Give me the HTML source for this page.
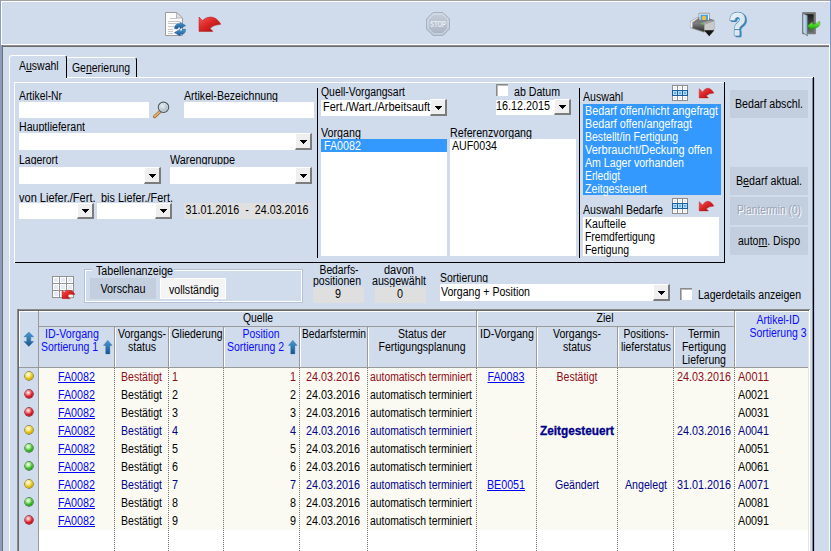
<!DOCTYPE html>
<html><head><meta charset="utf-8"><title>Bedarf</title>
<style>
html,body{margin:0;padding:0;}
body{width:831px;height:551px;overflow:hidden;position:relative;background:#d0dcec;font-family:"Liberation Sans",sans-serif;font-size:12px;}
body div{position:absolute;}
.t{overflow:visible;}
.cb{box-sizing:border-box;background:#efefef;border-top:1px solid #fff;border-left:1px solid #fff;border-right:2px solid #7c7c7c;border-bottom:2px solid #7c7c7c;}
.cb i{position:absolute;left:4px;width:7px;height:1px;background:#000;}
svg{position:absolute;overflow:visible;}
</style></head><body>
<div style="left:0px;top:0px;width:831px;height:1px;background:#a3a3a3;"></div>
<div style="left:1px;top:1px;width:829px;height:1px;background:#fff;"></div>
<div style="left:0px;top:0px;width:1px;height:551px;background:#8a9bbd;"></div>
<div style="left:1px;top:1px;width:1px;height:44px;background:#fff;"></div>
<div style="left:830px;top:0px;width:1px;height:551px;background:#7f98c4;"></div>
<div style="left:1px;top:44px;width:829px;height:1px;background:#fff;"></div>
<div style="left:2px;top:45px;width:827px;height:1px;background:#8e8e8e;"></div>
<div style="left:2px;top:46px;width:827px;height:1px;background:#6c6c6c;"></div>
<div style="left:1px;top:45px;width:1px;height:506px;background:#8c9cbc;"></div>
<div style="left:2px;top:45px;width:1px;height:506px;background:#707070;"></div>
<div style="left:829px;top:45px;width:1px;height:506px;background:#fff;"></div>
<div style="left:67px;top:77px;width:746px;height:1px;background:#fff;"></div>
<div style="left:9px;top:77px;width:1px;height:474px;background:#fff;"></div>
<div style="left:813px;top:77px;width:1px;height:474px;background:#000;"></div>
<div style="left:812px;top:78px;width:1px;height:473px;background:#7a879c;"></div>
<div style="left:814px;top:78px;width:1px;height:473px;background:#b4c4dc;"></div>
<div style="left:9px;top:55px;width:58px;height:23px;border:1px solid #fff;border-bottom:none;border-right:1.4px solid #000;border-radius:3px 3px 0 0;box-sizing:border-box;background:#d0dcec"></div>
<div style="left:67px;top:57px;width:70px;height:20px;border-top:1px solid #fff;border-right:1.4px solid #000;border-radius:0 3px 0 0;box-sizing:border-box;"></div>
<div class="t" style="top:59px;left:18.5px;color:#000;font-size:12px;line-height:14px;height:14px;white-space:pre;transform:scaleX(0.8730);transform-origin:0 0;">A<u>u</u>swahl</div>
<div class="t" style="top:61px;left:71.5px;color:#000;font-size:12px;line-height:14px;height:14px;white-space:pre;transform:scaleX(0.8693);transform-origin:0 0;">Ge<u>n</u>erierung</div>
<div style="left:14px;top:82px;width:710px;height:1px;background:#fff;"></div>
<div style="left:14px;top:82px;width:1px;height:181px;background:#fff;"></div>
<div style="left:15px;top:262px;width:710px;height:1px;background:#000;"></div>
<div style="left:724px;top:82px;width:1px;height:181px;background:#000;"></div>
<div style="left:317px;top:88px;width:1px;height:170px;background:#000;"></div>
<div style="left:579px;top:88px;width:1px;height:170px;background:#000;"></div>
<div class="t" style="top:89px;left:19px;color:#000;font-size:12px;line-height:14px;height:14px;white-space:pre;transform:scaleX(0.8600);transform-origin:0 0;">Artikel-Nr</div>
<div style="left:19px;top:102px;width:130px;height:16px;background:#fff;"></div>
<div class="t" style="top:89px;left:184px;color:#000;font-size:12px;line-height:14px;height:14px;white-space:pre;transform:scaleX(0.8807);transform-origin:0 0;">Artikel-Bezeichnung</div>
<div style="left:184px;top:102px;width:130px;height:16px;background:#fff;"></div>
<div class="t" style="top:120px;left:19px;color:#000;font-size:12px;line-height:14px;height:14px;white-space:pre;transform:scaleX(0.8833);transform-origin:0 0;clip-path:inset(0 0 2.5px 0);">Hauptlieferant</div>
<div style="left:19px;top:133px;width:276px;height:17px;background:#fff;"></div>
<div class="cb" style="left:295px;top:133px;width:17px;height:17px"><i style="top:6px"></i><i style="top:7px;left:5px;width:5px"></i><i style="top:8px;left:6px;width:3px"></i><i style="top:9px;left:7px;width:1px"></i></div>
<div class="t" style="top:153px;left:19px;color:#000;font-size:12px;line-height:14px;height:14px;white-space:pre;transform:scaleX(0.8724);transform-origin:0 0;clip-path:inset(0 0 2.5px 0);">Lagerort</div>
<div style="left:19px;top:166.5px;width:125px;height:17px;background:#fff;"></div>
<div class="cb" style="left:144px;top:166.5px;width:17px;height:17px"><i style="top:6px"></i><i style="top:7px;left:5px;width:5px"></i><i style="top:8px;left:6px;width:3px"></i><i style="top:9px;left:7px;width:1px"></i></div>
<div class="t" style="top:153px;left:170px;color:#000;font-size:12px;line-height:14px;height:14px;white-space:pre;transform:scaleX(0.8995);transform-origin:0 0;clip-path:inset(0 0 2.5px 0);">Warengruppe</div>
<div style="left:170px;top:166.5px;width:125px;height:17px;background:#fff;"></div>
<div class="cb" style="left:295px;top:166.5px;width:17px;height:17px"><i style="top:6px"></i><i style="top:7px;left:5px;width:5px"></i><i style="top:8px;left:6px;width:3px"></i><i style="top:9px;left:7px;width:1px"></i></div>
<div class="t" style="top:191px;left:19px;color:#000;font-size:12px;line-height:14px;height:14px;white-space:pre;transform:scaleX(0.9175);transform-origin:0 0;">von Liefer./Fert.</div>
<div style="left:19px;top:203px;width:58px;height:16px;background:#fff;"></div>
<div class="cb" style="left:77px;top:203px;width:17px;height:16px"><i style="top:5px"></i><i style="top:6px;left:5px;width:5px"></i><i style="top:7px;left:6px;width:3px"></i><i style="top:8px;left:7px;width:1px"></i></div>
<div class="t" style="top:191px;left:100.5px;color:#000;font-size:12px;line-height:14px;height:14px;white-space:pre;transform:scaleX(0.9071);transform-origin:0 0;">bis Liefer./Fert.</div>
<div style="left:97px;top:203px;width:58px;height:16px;background:#fff;"></div>
<div class="cb" style="left:155px;top:203px;width:17px;height:16px"><i style="top:5px"></i><i style="top:6px;left:5px;width:5px"></i><i style="top:7px;left:6px;width:3px"></i><i style="top:8px;left:7px;width:1px"></i></div>
<div style="left:184px;top:203.4px;width:126px;height:15.4px;background:#e0e0e0;"></div>
<div class="t" style="top:203px;left:47px;width:400px;text-align:center;color:#000;font-size:12px;line-height:14px;height:14px;white-space:pre;transform:scaleX(0.8949);transform-origin:50% 0;">31.01.2016  -  24.03.2016</div>
<div class="t" style="top:85px;left:321px;color:#000;font-size:12px;line-height:14px;height:14px;white-space:pre;transform:scaleX(0.8684);transform-origin:0 0;">Quell-Vorgangsart</div>
<div style="left:321px;top:100px;width:109px;height:16px;background:#fff;"></div>
<div class="cb" style="left:430px;top:99px;width:17px;height:17px"><i style="top:6px"></i><i style="top:7px;left:5px;width:5px"></i><i style="top:8px;left:6px;width:3px"></i><i style="top:9px;left:7px;width:1px"></i></div>
<div class="t" style="top:100px;left:322.5px;color:#000;font-size:12px;line-height:14px;height:14px;white-space:pre;transform:scaleX(0.9151);transform-origin:0 0;">Fert./Wart./Arbeitsauft</div>
<div style="left:496px;top:84.3px;width:12.3px;height:12.1px;background:#fff;border-top:1px solid #8a8a8a;border-left:1px solid #8a8a8a;box-sizing:border-box;box-shadow:inset 1px 1px 0 #b8b8b8;"></div>
<div class="t" style="top:85px;left:513.5px;color:#000;font-size:12px;line-height:14px;height:14px;white-space:pre;transform:scaleX(0.8841);transform-origin:0 0;">ab Datum</div>
<div style="left:496px;top:99.6px;width:58px;height:15px;background:#fff;"></div>
<div class="cb" style="left:554px;top:98.8px;width:17px;height:16px"><i style="top:5px"></i><i style="top:6px;left:5px;width:5px"></i><i style="top:7px;left:6px;width:3px"></i><i style="top:8px;left:7px;width:1px"></i></div>
<div class="t" style="top:99px;left:496.4px;color:#000;font-size:12px;line-height:14px;height:14px;white-space:pre;transform:scaleX(0.8991);transform-origin:0 0;">16.12.2015</div>
<div class="t" style="top:126px;left:321px;color:#000;font-size:12px;line-height:14px;height:14px;white-space:pre;transform:scaleX(0.8945);transform-origin:0 0;">Vorgang</div>
<div style="left:321px;top:139px;width:126px;height:117px;background:#fff;"></div>
<div style="left:321px;top:139px;width:126px;height:13px;background:#3399ff;"></div>
<div class="t" style="top:139px;left:323.5px;color:#fff;font-size:12px;line-height:14px;height:14px;white-space:pre;transform:scaleX(0.8943);transform-origin:0 0;">FA0082</div>
<div class="t" style="top:126px;left:450px;color:#000;font-size:12px;line-height:14px;height:14px;white-space:pre;transform:scaleX(0.8907);transform-origin:0 0;">Referenzvorgang</div>
<div style="left:450px;top:139px;width:126px;height:117px;background:#fff;"></div>
<div class="t" style="top:139px;left:452px;color:#000;font-size:12px;line-height:14px;height:14px;white-space:pre;transform:scaleX(0.8875);transform-origin:0 0;">AUF0034</div>
<div class="t" style="top:90px;left:583px;color:#000;font-size:12px;line-height:14px;height:14px;white-space:pre;transform:scaleX(0.8818);transform-origin:0 0;">Auswahl</div>
<div style="left:583px;top:104px;width:138px;height:91px;background:#3399ff;"></div>
<div class="t" style="top:103.6px;left:585px;color:#fff;font-size:12px;line-height:14px;height:14px;white-space:pre;transform:scaleX(0.8993);transform-origin:0 0;">Bedarf offen/nicht angefragt</div>
<div class="t" style="top:116.6px;left:585px;color:#fff;font-size:12px;line-height:14px;height:14px;white-space:pre;transform:scaleX(0.8976);transform-origin:0 0;">Bedarf offen/angefragt</div>
<div class="t" style="top:129.6px;left:585px;color:#fff;font-size:12px;line-height:14px;height:14px;white-space:pre;transform:scaleX(0.8768);transform-origin:0 0;">Bestellt/in Fertigung</div>
<div class="t" style="top:142.6px;left:585px;color:#fff;font-size:12px;line-height:14px;height:14px;white-space:pre;transform:scaleX(0.9167);transform-origin:0 0;">Verbraucht/Deckung offen</div>
<div class="t" style="top:155.6px;left:585px;color:#fff;font-size:12px;line-height:14px;height:14px;white-space:pre;transform:scaleX(0.8833);transform-origin:0 0;">Am Lager vorhanden</div>
<div class="t" style="top:168.6px;left:585px;color:#fff;font-size:12px;line-height:14px;height:14px;white-space:pre;transform:scaleX(0.8602);transform-origin:0 0;">Erledigt</div>
<div class="t" style="top:181.6px;left:585px;color:#fff;font-size:12px;line-height:14px;height:14px;white-space:pre;transform:scaleX(0.8851);transform-origin:0 0;">Zeitgesteuert</div>
<div class="t" style="top:203px;left:583px;color:#000;font-size:12px;line-height:14px;height:14px;white-space:pre;transform:scaleX(0.8817);transform-origin:0 0;">Auswahl Bedarfe</div>
<div style="left:583px;top:217px;width:136px;height:39px;background:#fff;"></div>
<div class="t" style="top:216.5px;left:585px;color:#000;font-size:12px;line-height:14px;height:14px;white-space:pre;transform:scaleX(0.8779);transform-origin:0 0;">Kaufteile</div>
<div class="t" style="top:229.5px;left:585px;color:#000;font-size:12px;line-height:14px;height:14px;white-space:pre;transform:scaleX(0.8602);transform-origin:0 0;">Fremdfertigung</div>
<div class="t" style="top:242.5px;left:585px;color:#000;font-size:12px;line-height:14px;height:14px;white-space:pre;transform:scaleX(0.8678);transform-origin:0 0;">Fertigung</div>
<div style="left:730px;top:90px;width:78px;height:28px;background:#c3cfdf;"></div>
<div class="t" style="top:97px;left:569px;width:400px;text-align:center;color:#000;font-size:12px;line-height:14px;height:14px;white-space:pre;transform:scaleX(0.8864);transform-origin:50% 0;">Bedarf abschl.</div>
<div style="left:730px;top:167px;width:78px;height:28px;background:#c3cfdf;"></div>
<div class="t" style="top:174px;left:569px;width:400px;text-align:center;color:#000;font-size:12px;line-height:14px;height:14px;white-space:pre;transform:scaleX(0.8913);transform-origin:50% 0;">B<u>e</u>darf aktual.</div>
<div style="left:730px;top:197px;width:78px;height:28px;background:#c3cfdf;"></div>
<div class="t" style="top:204px;left:570px;width:400px;text-align:center;color:#fff;font-size:12px;line-height:14px;height:14px;white-space:pre;transform:scaleX(0.8493);transform-origin:50% 0;">Plantermin (0)</div>
<div class="t" style="top:203px;left:569px;width:400px;text-align:center;color:#9aa4b4;font-size:12px;line-height:14px;height:14px;white-space:pre;transform:scaleX(0.8493);transform-origin:50% 0;">Plantermin (0)</div>
<div style="left:730px;top:227px;width:78px;height:28px;background:#c3cfdf;"></div>
<div class="t" style="top:234px;left:569px;width:400px;text-align:center;color:#000;font-size:12px;line-height:14px;height:14px;white-space:pre;transform:scaleX(0.8769);transform-origin:50% 0;">auto<u>m</u>. Dispo</div>
<div style="left:84.5px;top:270.4px;width:217.6px;height:31.6px;border:1.3px solid #fff;box-sizing:border-box;box-shadow:0 0 0 0.8px rgba(130,145,170,.45);"></div>
<div style="left:92px;top:264px;width:81.5px;height:12px;background:#d0dcec;"></div>
<div class="t" style="top:264px;left:95.5px;color:#000;font-size:12px;line-height:14px;height:14px;white-space:pre;transform:scaleX(0.8876);transform-origin:0 0;">Tabellenanzeige</div>
<div style="left:90px;top:278px;width:66px;height:21px;background:#c3cfdf;"></div>
<div class="t" style="top:282px;left:-77px;width:400px;text-align:center;color:#000;font-size:12px;line-height:14px;height:14px;white-space:pre;transform:scaleX(0.8992);transform-origin:50% 0;">Vorschau</div>
<div style="left:160px;top:278px;width:66px;height:21px;background:#f4f4f4;border:1px solid #fff;box-sizing:border-box;"></div>
<div class="t" style="top:283px;left:-6.5px;width:400px;text-align:center;color:#000;font-size:12px;line-height:14px;height:14px;white-space:pre;transform:scaleX(0.8818);transform-origin:50% 0;">vollständig</div>
<div class="t" style="top:263px;left:139px;width:400px;text-align:center;color:#000;font-size:12px;line-height:14px;height:14px;white-space:pre;transform:scaleX(0.8598);transform-origin:50% 0;">Bedarfs-</div>
<div class="t" style="top:274px;left:137px;width:400px;text-align:center;color:#000;font-size:12px;line-height:14px;height:14px;white-space:pre;transform:scaleX(0.8772);transform-origin:50% 0;">positionen</div>
<div style="left:313px;top:286.6px;width:51.2px;height:16.2px;background:#dfdfdf;"></div>
<div class="t" style="top:287px;left:138px;width:400px;text-align:center;color:#000;font-size:12px;line-height:14px;height:14px;white-space:pre;transform:scaleX(0.8972);transform-origin:50% 0;">9</div>
<div class="t" style="top:263px;left:199px;width:400px;text-align:center;color:#000;font-size:12px;line-height:14px;height:14px;white-space:pre;transform:scaleX(0.9173);transform-origin:50% 0;">davon</div>
<div class="t" style="top:274px;left:199px;width:400px;text-align:center;color:#000;font-size:12px;line-height:14px;height:14px;white-space:pre;transform:scaleX(0.8893);transform-origin:50% 0;">ausgewählt</div>
<div style="left:375px;top:286.6px;width:51px;height:16.2px;background:#dfdfdf;"></div>
<div class="t" style="top:287px;left:200px;width:400px;text-align:center;color:#000;font-size:12px;line-height:14px;height:14px;white-space:pre;transform:scaleX(0.8972);transform-origin:50% 0;">0</div>
<div class="t" style="top:271px;left:440px;color:#000;font-size:12px;line-height:14px;height:14px;white-space:pre;transform:scaleX(0.8668);transform-origin:0 0;clip-path:inset(0 0 2.5px 0);">Sortierung</div>
<div style="left:440px;top:284px;width:213px;height:17px;background:#fff;"></div>
<div class="cb" style="left:653px;top:284px;width:17px;height:17px"><i style="top:6px"></i><i style="top:7px;left:5px;width:5px"></i><i style="top:8px;left:6px;width:3px"></i><i style="top:9px;left:7px;width:1px"></i></div>
<div class="t" style="top:285px;left:441px;color:#000;font-size:12px;line-height:14px;height:14px;white-space:pre;transform:scaleX(0.8805);transform-origin:0 0;">Vorgang + Position</div>
<div style="left:680px;top:288.3px;width:12.3px;height:12.1px;background:#fff;border-top:1px solid #8a8a8a;border-left:1px solid #8a8a8a;box-sizing:border-box;box-shadow:inset 1px 1px 0 #b8b8b8;"></div>
<div class="t" style="top:288px;left:698px;color:#000;font-size:12px;line-height:14px;height:14px;white-space:pre;transform:scaleX(0.8772);transform-origin:0 0;">Lagerdetails anzeigen</div>
<div style="left:17px;top:309px;width:793px;height:242px;background:#fff;"></div>
<div style="left:19px;top:311px;width:789px;height:57px;background:#d0dcec;"></div>
<div style="left:19px;top:368px;width:20px;height:183px;background:#d0dcec;"></div>
<div style="left:39px;top:368px;width:769px;height:162px;background:#fafaf2;"></div>
<div style="left:17px;top:309px;width:793px;height:1px;background:#8c8c8c;"></div>
<div style="left:17px;top:310px;width:793px;height:1px;background:#686868;"></div>
<div style="left:17px;top:309px;width:1px;height:242px;background:#8c8c8c;"></div>
<div style="left:18px;top:309px;width:1px;height:242px;background:#686868;"></div>
<div style="left:808px;top:311px;width:1px;height:240px;background:#e4e4e4;"></div>
<div style="left:809px;top:310px;width:1px;height:241px;background:#fff;"></div>
<div style="left:19px;top:311px;width:789px;height:1px;background:#fff;"></div>
<div style="left:19px;top:311px;width:1px;height:57px;background:#fff;"></div>
<div style="left:38px;top:311px;width:1px;height:240px;background:#9a9a9a;"></div>
<div style="left:39px;top:326px;width:696px;height:1px;background:#9a9a9a;"></div>
<div style="left:19px;top:367px;width:789px;height:1px;background:#9a9a9a;"></div>
<div style="left:114px;top:327px;width:1px;height:41px;background:#9a9a9a;"></div>
<div style="left:115px;top:328px;width:1px;height:39px;background:#fff;"></div>
<div style="left:114px;top:368px;width:0;height:183px;border-left:1px dotted #707070;"></div>
<div style="left:168px;top:327px;width:1px;height:41px;background:#9a9a9a;"></div>
<div style="left:169px;top:328px;width:1px;height:39px;background:#fff;"></div>
<div style="left:168px;top:368px;width:0;height:183px;border-left:1px dotted #707070;"></div>
<div style="left:223px;top:327px;width:1px;height:41px;background:#9a9a9a;"></div>
<div style="left:224px;top:328px;width:1px;height:39px;background:#fff;"></div>
<div style="left:223px;top:368px;width:0;height:183px;border-left:1px dotted #707070;"></div>
<div style="left:299px;top:327px;width:1px;height:41px;background:#9a9a9a;"></div>
<div style="left:300px;top:328px;width:1px;height:39px;background:#fff;"></div>
<div style="left:299px;top:368px;width:0;height:183px;border-left:1px dotted #707070;"></div>
<div style="left:367px;top:327px;width:1px;height:41px;background:#9a9a9a;"></div>
<div style="left:368px;top:328px;width:1px;height:39px;background:#fff;"></div>
<div style="left:367px;top:368px;width:0;height:183px;border-left:1px dotted #707070;"></div>
<div style="left:476px;top:311px;width:1px;height:57px;background:#9a9a9a;"></div>
<div style="left:477px;top:312px;width:1px;height:55px;background:#fff;"></div>
<div style="left:476px;top:368px;width:0;height:183px;border-left:1px dotted #707070;"></div>
<div style="left:536px;top:327px;width:1px;height:41px;background:#9a9a9a;"></div>
<div style="left:537px;top:328px;width:1px;height:39px;background:#fff;"></div>
<div style="left:536px;top:368px;width:0;height:183px;border-left:1px dotted #707070;"></div>
<div style="left:617px;top:327px;width:1px;height:41px;background:#9a9a9a;"></div>
<div style="left:618px;top:328px;width:1px;height:39px;background:#fff;"></div>
<div style="left:617px;top:368px;width:0;height:183px;border-left:1px dotted #707070;"></div>
<div style="left:673px;top:327px;width:1px;height:41px;background:#9a9a9a;"></div>
<div style="left:674px;top:328px;width:1px;height:39px;background:#fff;"></div>
<div style="left:673px;top:368px;width:0;height:183px;border-left:1px dotted #707070;"></div>
<div style="left:734px;top:311px;width:1px;height:57px;background:#9a9a9a;"></div>
<div style="left:735px;top:312px;width:1px;height:55px;background:#fff;"></div>
<div style="left:734px;top:368px;width:0;height:183px;border-left:1px dotted #707070;"></div>
<div class="t" style="top:311px;left:58px;width:400px;text-align:center;color:#000;font-size:12px;line-height:14px;height:14px;white-space:pre;transform:scaleX(0.8649);transform-origin:50% 0;">Quelle</div>
<div class="t" style="top:311px;left:405px;width:400px;text-align:center;color:#000;font-size:12px;line-height:14px;height:14px;white-space:pre;transform:scaleX(0.8788);transform-origin:50% 0;">Ziel</div>
<div class="t" style="top:327px;left:-128px;width:400px;text-align:center;color:#0a0aff;font-size:12px;line-height:14px;height:14px;white-space:pre;transform:scaleX(0.8896);transform-origin:50% 0;">ID-Vorgang</div>
<div class="t" style="top:340px;left:41px;color:#0a0aff;font-size:12px;line-height:14px;height:14px;white-space:pre;transform:scaleX(0.8719);transform-origin:0 0;">Sortierung 1</div>
<div class="t" style="top:327px;left:-58.5px;width:400px;text-align:center;color:#000;font-size:12px;line-height:14px;height:14px;white-space:pre;transform:scaleX(0.8775);transform-origin:50% 0;">Vorgangs-</div>
<div class="t" style="top:340px;left:-58.5px;width:400px;text-align:center;color:#000;font-size:12px;line-height:14px;height:14px;white-space:pre;transform:scaleX(0.8746);transform-origin:50% 0;">status</div>
<div class="t" style="top:327px;left:-3.2px;width:400px;text-align:center;color:#000;font-size:12px;line-height:14px;height:14px;white-space:pre;transform:scaleX(0.8685);transform-origin:50% 0;">Gliederung</div>
<div class="t" style="top:327px;left:61px;width:400px;text-align:center;color:#0a0aff;font-size:12px;line-height:14px;height:14px;white-space:pre;transform:scaleX(0.8664);transform-origin:50% 0;">Position</div>
<div class="t" style="top:340px;left:227px;color:#0a0aff;font-size:12px;line-height:14px;height:14px;white-space:pre;transform:scaleX(0.8719);transform-origin:0 0;">Sortierung 2</div>
<div class="t" style="top:327px;left:134px;width:400px;text-align:center;color:#000;font-size:12px;line-height:14px;height:14px;white-space:pre;transform:scaleX(0.8567);transform-origin:50% 0;">Bedarfstermin</div>
<div class="t" style="top:327px;left:222px;width:400px;text-align:center;color:#000;font-size:12px;line-height:14px;height:14px;white-space:pre;transform:scaleX(0.8775);transform-origin:50% 0;">Status der</div>
<div class="t" style="top:340px;left:222px;width:400px;text-align:center;color:#000;font-size:12px;line-height:14px;height:14px;white-space:pre;transform:scaleX(0.8752);transform-origin:50% 0;">Fertigungsplanung</div>
<div class="t" style="top:327px;left:306.5px;width:400px;text-align:center;color:#000;font-size:12px;line-height:14px;height:14px;white-space:pre;transform:scaleX(0.8896);transform-origin:50% 0;">ID-Vorgang</div>
<div class="t" style="top:327px;left:377px;width:400px;text-align:center;color:#000;font-size:12px;line-height:14px;height:14px;white-space:pre;transform:scaleX(0.8775);transform-origin:50% 0;">Vorgangs-</div>
<div class="t" style="top:340px;left:377px;width:400px;text-align:center;color:#000;font-size:12px;line-height:14px;height:14px;white-space:pre;transform:scaleX(0.8746);transform-origin:50% 0;">status</div>
<div class="t" style="top:327px;left:446px;width:400px;text-align:center;color:#000;font-size:12px;line-height:14px;height:14px;white-space:pre;transform:scaleX(0.8541);transform-origin:50% 0;">Positions-</div>
<div class="t" style="top:340px;left:446px;width:400px;text-align:center;color:#000;font-size:12px;line-height:14px;height:14px;white-space:pre;transform:scaleX(0.8616);transform-origin:50% 0;">lieferstatus</div>
<div class="t" style="top:327px;left:504px;width:400px;text-align:center;color:#000;font-size:12px;line-height:14px;height:14px;white-space:pre;transform:scaleX(0.8885);transform-origin:50% 0;">Termin</div>
<div class="t" style="top:340px;left:504px;width:400px;text-align:center;color:#000;font-size:12px;line-height:14px;height:14px;white-space:pre;transform:scaleX(0.8678);transform-origin:50% 0;">Fertigung</div>
<div class="t" style="top:353px;left:504px;width:400px;text-align:center;color:#000;font-size:12px;line-height:14px;height:14px;white-space:pre;transform:scaleX(0.8792);transform-origin:50% 0;">Lieferung</div>
<div class="t" style="top:313px;left:578px;width:400px;text-align:center;color:#0a0aff;font-size:12px;line-height:14px;height:14px;white-space:pre;transform:scaleX(0.8714);transform-origin:50% 0;">Artikel-ID</div>
<div class="t" style="top:326px;left:578px;width:400px;text-align:center;color:#0a0aff;font-size:12px;line-height:14px;height:14px;white-space:pre;transform:scaleX(0.8719);transform-origin:50% 0;">Sortierung 3</div>
<div style="left:24.6px;top:371.6px;width:8.8px;height:8.8px;border-radius:50%;background:radial-gradient(circle at 40% 32%,#fff 0,#fff3a0 22%,#e6c210 55%,#a08400 100%);box-shadow:0 0 0 0.7px #7a6a10;"></div>
<div class="t" style="top:370px;left:58px;color:#0000ff;font-size:12px;line-height:14px;height:14px;white-space:pre;transform:scaleX(0.8943);transform-origin:0 0;text-decoration:underline;">FA0082</div>
<div class="t" style="top:370px;left:121px;color:#900c16;font-size:12px;line-height:14px;height:14px;white-space:pre;transform:scaleX(0.8779);transform-origin:0 0;">Bestätigt</div>
<div class="t" style="top:370px;left:172px;color:#900c16;font-size:12px;line-height:14px;height:14px;white-space:pre;transform:scaleX(0.8972);transform-origin:0 0;">1</div>
<div class="t" style="top:370px;left:-104px;width:400px;text-align:right;color:#900c16;font-size:12px;line-height:14px;height:14px;white-space:pre;transform:scaleX(0.8972);transform-origin:100% 0;">1</div>
<div class="t" style="top:370px;left:305.6px;color:#900c16;font-size:12px;line-height:14px;height:14px;white-space:pre;transform:scaleX(0.8991);transform-origin:0 0;">24.03.2016</div>
<div class="t" style="top:370px;left:370.4px;color:#900c16;font-size:12px;line-height:14px;height:14px;white-space:pre;transform:scaleX(0.8641);transform-origin:0 0;">automatisch terminiert</div>
<div class="t" style="top:370px;left:306px;width:400px;text-align:center;color:#0000ff;font-size:12px;line-height:14px;height:14px;white-space:pre;transform:scaleX(0.8943);transform-origin:50% 0;text-decoration:underline;">FA0083</div>
<div class="t" style="top:370px;left:377px;width:400px;text-align:center;color:#900c16;font-size:12px;line-height:14px;height:14px;white-space:pre;transform:scaleX(0.8779);transform-origin:50% 0;">Bestätigt</div>
<div class="t" style="top:370px;left:677px;color:#900c16;font-size:12px;line-height:14px;height:14px;white-space:pre;transform:scaleX(0.8991);transform-origin:0 0;">24.03.2016</div>
<div class="t" style="top:370px;left:738px;color:#900c16;font-size:12px;line-height:14px;height:14px;white-space:pre;transform:scaleX(0.9168);transform-origin:0 0;">A0011</div>
<div style="left:24.6px;top:389.6px;width:8.8px;height:8.8px;border-radius:50%;background:radial-gradient(circle at 40% 32%,#fff 0,#ffa0a0 22%,#d81c24 55%,#900810 100%);box-shadow:0 0 0 0.7px #7a1018;"></div>
<div class="t" style="top:388px;left:58px;color:#0000ff;font-size:12px;line-height:14px;height:14px;white-space:pre;transform:scaleX(0.8943);transform-origin:0 0;text-decoration:underline;">FA0082</div>
<div class="t" style="top:388px;left:121px;color:#000;font-size:12px;line-height:14px;height:14px;white-space:pre;transform:scaleX(0.8779);transform-origin:0 0;">Bestätigt</div>
<div class="t" style="top:388px;left:172px;color:#000;font-size:12px;line-height:14px;height:14px;white-space:pre;transform:scaleX(0.8972);transform-origin:0 0;">2</div>
<div class="t" style="top:388px;left:-104px;width:400px;text-align:right;color:#000;font-size:12px;line-height:14px;height:14px;white-space:pre;transform:scaleX(0.8972);transform-origin:100% 0;">2</div>
<div class="t" style="top:388px;left:305.6px;color:#000;font-size:12px;line-height:14px;height:14px;white-space:pre;transform:scaleX(0.8991);transform-origin:0 0;">24.03.2016</div>
<div class="t" style="top:388px;left:370.4px;color:#000;font-size:12px;line-height:14px;height:14px;white-space:pre;transform:scaleX(0.8641);transform-origin:0 0;">automatisch terminiert</div>
<div class="t" style="top:388px;left:738px;color:#000;font-size:12px;line-height:14px;height:14px;white-space:pre;transform:scaleX(0.8933);transform-origin:0 0;">A0021</div>
<div style="left:24.6px;top:407.6px;width:8.8px;height:8.8px;border-radius:50%;background:radial-gradient(circle at 40% 32%,#fff 0,#ffa0a0 22%,#d81c24 55%,#900810 100%);box-shadow:0 0 0 0.7px #7a1018;"></div>
<div class="t" style="top:406px;left:58px;color:#0000ff;font-size:12px;line-height:14px;height:14px;white-space:pre;transform:scaleX(0.8943);transform-origin:0 0;text-decoration:underline;">FA0082</div>
<div class="t" style="top:406px;left:121px;color:#000;font-size:12px;line-height:14px;height:14px;white-space:pre;transform:scaleX(0.8779);transform-origin:0 0;">Bestätigt</div>
<div class="t" style="top:406px;left:172px;color:#000;font-size:12px;line-height:14px;height:14px;white-space:pre;transform:scaleX(0.8972);transform-origin:0 0;">3</div>
<div class="t" style="top:406px;left:-104px;width:400px;text-align:right;color:#000;font-size:12px;line-height:14px;height:14px;white-space:pre;transform:scaleX(0.8972);transform-origin:100% 0;">3</div>
<div class="t" style="top:406px;left:305.6px;color:#000;font-size:12px;line-height:14px;height:14px;white-space:pre;transform:scaleX(0.8991);transform-origin:0 0;">24.03.2016</div>
<div class="t" style="top:406px;left:370.4px;color:#000;font-size:12px;line-height:14px;height:14px;white-space:pre;transform:scaleX(0.8641);transform-origin:0 0;">automatisch terminiert</div>
<div class="t" style="top:406px;left:738px;color:#000;font-size:12px;line-height:14px;height:14px;white-space:pre;transform:scaleX(0.8933);transform-origin:0 0;">A0031</div>
<div style="left:24.6px;top:425.6px;width:8.8px;height:8.8px;border-radius:50%;background:radial-gradient(circle at 40% 32%,#fff 0,#fff3a0 22%,#e6c210 55%,#a08400 100%);box-shadow:0 0 0 0.7px #7a6a10;"></div>
<div class="t" style="top:424px;left:58px;color:#0000ff;font-size:12px;line-height:14px;height:14px;white-space:pre;transform:scaleX(0.8943);transform-origin:0 0;text-decoration:underline;">FA0082</div>
<div class="t" style="top:424px;left:121px;color:#00008b;font-size:12px;line-height:14px;height:14px;white-space:pre;transform:scaleX(0.8779);transform-origin:0 0;">Bestätigt</div>
<div class="t" style="top:424px;left:172px;color:#00008b;font-size:12px;line-height:14px;height:14px;white-space:pre;transform:scaleX(0.8972);transform-origin:0 0;">4</div>
<div class="t" style="top:424px;left:-104px;width:400px;text-align:right;color:#00008b;font-size:12px;line-height:14px;height:14px;white-space:pre;transform:scaleX(0.8972);transform-origin:100% 0;">4</div>
<div class="t" style="top:424px;left:305.6px;color:#00008b;font-size:12px;line-height:14px;height:14px;white-space:pre;transform:scaleX(0.8991);transform-origin:0 0;">24.03.2016</div>
<div class="t" style="top:424px;left:370.4px;color:#00008b;font-size:12px;line-height:14px;height:14px;white-space:pre;transform:scaleX(0.8641);transform-origin:0 0;">automatisch terminiert</div>
<div class="t" style="top:424px;left:377px;width:400px;text-align:center;color:#00008b;font-size:12px;line-height:14px;height:14px;white-space:pre;transform:scaleX(0.9820);transform-origin:50% 0;font-weight:bold;-webkit-text-stroke:.3px #00008b;">Zeitgesteuert</div>
<div class="t" style="top:424px;left:677px;color:#00008b;font-size:12px;line-height:14px;height:14px;white-space:pre;transform:scaleX(0.8991);transform-origin:0 0;">24.03.2016</div>
<div class="t" style="top:424px;left:738px;color:#00008b;font-size:12px;line-height:14px;height:14px;white-space:pre;transform:scaleX(0.8933);transform-origin:0 0;">A0041</div>
<div style="left:24.6px;top:443.6px;width:8.8px;height:8.8px;border-radius:50%;background:radial-gradient(circle at 40% 32%,#fff 0,#c0f4a8 22%,#38b828 55%,#1c7c14 100%);box-shadow:0 0 0 0.7px #2a6a20;"></div>
<div class="t" style="top:442px;left:58px;color:#0000ff;font-size:12px;line-height:14px;height:14px;white-space:pre;transform:scaleX(0.8943);transform-origin:0 0;text-decoration:underline;">FA0082</div>
<div class="t" style="top:442px;left:121px;color:#000;font-size:12px;line-height:14px;height:14px;white-space:pre;transform:scaleX(0.8779);transform-origin:0 0;">Bestätigt</div>
<div class="t" style="top:442px;left:172px;color:#000;font-size:12px;line-height:14px;height:14px;white-space:pre;transform:scaleX(0.8972);transform-origin:0 0;">5</div>
<div class="t" style="top:442px;left:-104px;width:400px;text-align:right;color:#000;font-size:12px;line-height:14px;height:14px;white-space:pre;transform:scaleX(0.8972);transform-origin:100% 0;">5</div>
<div class="t" style="top:442px;left:305.6px;color:#000;font-size:12px;line-height:14px;height:14px;white-space:pre;transform:scaleX(0.8991);transform-origin:0 0;">24.03.2016</div>
<div class="t" style="top:442px;left:370.4px;color:#000;font-size:12px;line-height:14px;height:14px;white-space:pre;transform:scaleX(0.8641);transform-origin:0 0;">automatisch terminiert</div>
<div class="t" style="top:442px;left:738px;color:#000;font-size:12px;line-height:14px;height:14px;white-space:pre;transform:scaleX(0.8933);transform-origin:0 0;">A0051</div>
<div style="left:24.6px;top:461.6px;width:8.8px;height:8.8px;border-radius:50%;background:radial-gradient(circle at 40% 32%,#fff 0,#c0f4a8 22%,#38b828 55%,#1c7c14 100%);box-shadow:0 0 0 0.7px #2a6a20;"></div>
<div class="t" style="top:460px;left:58px;color:#0000ff;font-size:12px;line-height:14px;height:14px;white-space:pre;transform:scaleX(0.8943);transform-origin:0 0;text-decoration:underline;">FA0082</div>
<div class="t" style="top:460px;left:121px;color:#000;font-size:12px;line-height:14px;height:14px;white-space:pre;transform:scaleX(0.8779);transform-origin:0 0;">Bestätigt</div>
<div class="t" style="top:460px;left:172px;color:#000;font-size:12px;line-height:14px;height:14px;white-space:pre;transform:scaleX(0.8972);transform-origin:0 0;">6</div>
<div class="t" style="top:460px;left:-104px;width:400px;text-align:right;color:#000;font-size:12px;line-height:14px;height:14px;white-space:pre;transform:scaleX(0.8972);transform-origin:100% 0;">6</div>
<div class="t" style="top:460px;left:305.6px;color:#000;font-size:12px;line-height:14px;height:14px;white-space:pre;transform:scaleX(0.8991);transform-origin:0 0;">24.03.2016</div>
<div class="t" style="top:460px;left:370.4px;color:#000;font-size:12px;line-height:14px;height:14px;white-space:pre;transform:scaleX(0.8641);transform-origin:0 0;">automatisch terminiert</div>
<div class="t" style="top:460px;left:738px;color:#000;font-size:12px;line-height:14px;height:14px;white-space:pre;transform:scaleX(0.8933);transform-origin:0 0;">A0061</div>
<div style="left:24.6px;top:479.6px;width:8.8px;height:8.8px;border-radius:50%;background:radial-gradient(circle at 40% 32%,#fff 0,#fff3a0 22%,#e6c210 55%,#a08400 100%);box-shadow:0 0 0 0.7px #7a6a10;"></div>
<div class="t" style="top:478px;left:58px;color:#0000ff;font-size:12px;line-height:14px;height:14px;white-space:pre;transform:scaleX(0.8943);transform-origin:0 0;text-decoration:underline;">FA0082</div>
<div class="t" style="top:478px;left:121px;color:#00008b;font-size:12px;line-height:14px;height:14px;white-space:pre;transform:scaleX(0.8779);transform-origin:0 0;">Bestätigt</div>
<div class="t" style="top:478px;left:172px;color:#00008b;font-size:12px;line-height:14px;height:14px;white-space:pre;transform:scaleX(0.8972);transform-origin:0 0;">7</div>
<div class="t" style="top:478px;left:-104px;width:400px;text-align:right;color:#00008b;font-size:12px;line-height:14px;height:14px;white-space:pre;transform:scaleX(0.8972);transform-origin:100% 0;">7</div>
<div class="t" style="top:478px;left:305.6px;color:#00008b;font-size:12px;line-height:14px;height:14px;white-space:pre;transform:scaleX(0.8991);transform-origin:0 0;">24.03.2016</div>
<div class="t" style="top:478px;left:370.4px;color:#00008b;font-size:12px;line-height:14px;height:14px;white-space:pre;transform:scaleX(0.8641);transform-origin:0 0;">automatisch terminiert</div>
<div class="t" style="top:478px;left:306px;width:400px;text-align:center;color:#0000ff;font-size:12px;line-height:14px;height:14px;white-space:pre;transform:scaleX(0.8899);transform-origin:50% 0;text-decoration:underline;">BE0051</div>
<div class="t" style="top:478px;left:377px;width:400px;text-align:center;color:#00008b;font-size:12px;line-height:14px;height:14px;white-space:pre;transform:scaleX(0.8792);transform-origin:50% 0;">Geändert</div>
<div class="t" style="top:478px;left:446px;width:400px;text-align:center;color:#00008b;font-size:12px;line-height:14px;height:14px;white-space:pre;transform:scaleX(0.8865);transform-origin:50% 0;">Angelegt</div>
<div class="t" style="top:478px;left:677px;color:#00008b;font-size:12px;line-height:14px;height:14px;white-space:pre;transform:scaleX(0.8991);transform-origin:0 0;">31.01.2016</div>
<div class="t" style="top:478px;left:738px;color:#00008b;font-size:12px;line-height:14px;height:14px;white-space:pre;transform:scaleX(0.8933);transform-origin:0 0;">A0071</div>
<div style="left:24.6px;top:497.6px;width:8.8px;height:8.8px;border-radius:50%;background:radial-gradient(circle at 40% 32%,#fff 0,#c0f4a8 22%,#38b828 55%,#1c7c14 100%);box-shadow:0 0 0 0.7px #2a6a20;"></div>
<div class="t" style="top:496px;left:58px;color:#0000ff;font-size:12px;line-height:14px;height:14px;white-space:pre;transform:scaleX(0.8943);transform-origin:0 0;text-decoration:underline;">FA0082</div>
<div class="t" style="top:496px;left:121px;color:#000;font-size:12px;line-height:14px;height:14px;white-space:pre;transform:scaleX(0.8779);transform-origin:0 0;">Bestätigt</div>
<div class="t" style="top:496px;left:172px;color:#000;font-size:12px;line-height:14px;height:14px;white-space:pre;transform:scaleX(0.8972);transform-origin:0 0;">8</div>
<div class="t" style="top:496px;left:-104px;width:400px;text-align:right;color:#000;font-size:12px;line-height:14px;height:14px;white-space:pre;transform:scaleX(0.8972);transform-origin:100% 0;">8</div>
<div class="t" style="top:496px;left:305.6px;color:#000;font-size:12px;line-height:14px;height:14px;white-space:pre;transform:scaleX(0.8991);transform-origin:0 0;">24.03.2016</div>
<div class="t" style="top:496px;left:370.4px;color:#000;font-size:12px;line-height:14px;height:14px;white-space:pre;transform:scaleX(0.8641);transform-origin:0 0;">automatisch terminiert</div>
<div class="t" style="top:496px;left:738px;color:#000;font-size:12px;line-height:14px;height:14px;white-space:pre;transform:scaleX(0.8933);transform-origin:0 0;">A0081</div>
<div style="left:24.6px;top:515.6px;width:8.8px;height:8.8px;border-radius:50%;background:radial-gradient(circle at 40% 32%,#fff 0,#ffa0a0 22%,#d81c24 55%,#900810 100%);box-shadow:0 0 0 0.7px #7a1018;"></div>
<div class="t" style="top:514px;left:58px;color:#0000ff;font-size:12px;line-height:14px;height:14px;white-space:pre;transform:scaleX(0.8943);transform-origin:0 0;text-decoration:underline;">FA0082</div>
<div class="t" style="top:514px;left:121px;color:#000;font-size:12px;line-height:14px;height:14px;white-space:pre;transform:scaleX(0.8779);transform-origin:0 0;">Bestätigt</div>
<div class="t" style="top:514px;left:172px;color:#000;font-size:12px;line-height:14px;height:14px;white-space:pre;transform:scaleX(0.8972);transform-origin:0 0;">9</div>
<div class="t" style="top:514px;left:-104px;width:400px;text-align:right;color:#000;font-size:12px;line-height:14px;height:14px;white-space:pre;transform:scaleX(0.8972);transform-origin:100% 0;">9</div>
<div class="t" style="top:514px;left:305.6px;color:#000;font-size:12px;line-height:14px;height:14px;white-space:pre;transform:scaleX(0.8991);transform-origin:0 0;">24.03.2016</div>
<div class="t" style="top:514px;left:370.4px;color:#000;font-size:12px;line-height:14px;height:14px;white-space:pre;transform:scaleX(0.8641);transform-origin:0 0;">automatisch terminiert</div>
<div class="t" style="top:514px;left:738px;color:#000;font-size:12px;line-height:14px;height:14px;white-space:pre;transform:scaleX(0.8933);transform-origin:0 0;">A0091</div>
<svg width="0" height="0" style="left:0;top:0"><defs>
<linearGradient id="gr" x1="0" y1="0" x2="1" y2="1"><stop offset="0" stop-color="#f25a5a"/><stop offset=".45" stop-color="#dc2626"/><stop offset="1" stop-color="#9c0c0c"/></linearGradient>
<linearGradient id="gb" x1="0" y1="0" x2="0" y2="1"><stop offset="0" stop-color="#4a9ad4"/><stop offset="1" stop-color="#17568c"/></linearGradient>
<linearGradient id="gst" x1="0" y1="0" x2="0" y2="1"><stop offset="0" stop-color="#c6ced9"/><stop offset="1" stop-color="#a9b4c4"/></linearGradient>
<radialGradient id="glens" cx=".4" cy=".35" r=".7"><stop offset="0" stop-color="#e6edf1"/><stop offset="1" stop-color="#9fb0bc"/></radialGradient>
<linearGradient id="gpr" x1="0" y1="0" x2="0" y2="1"><stop offset="0" stop-color="#8a8a8a"/><stop offset="1" stop-color="#2c2c2c"/></linearGradient>
<linearGradient id="gq" x1="0" y1="0" x2="1" y2="1"><stop offset="0" stop-color="#f4f9fc"/><stop offset="1" stop-color="#c4d8e4"/></linearGradient>
<linearGradient id="ggn" x1="0" y1="0" x2="0" y2="1"><stop offset="0" stop-color="#8cf060"/><stop offset=".5" stop-color="#3ccc1c"/><stop offset="1" stop-color="#1e8a0e"/></linearGradient>
<linearGradient id="gdoor" x1="0" y1="0" x2="1" y2="0"><stop offset="0" stop-color="#d4e8f4"/><stop offset="1" stop-color="#8ab4d0"/></linearGradient>
<linearGradient id="gfr" x1="0" y1="0" x2="0" y2="1"><stop offset="0" stop-color="#1c1c1c"/><stop offset="1" stop-color="#6a6a6a"/></linearGradient>
</defs></svg>
<svg style="left:165px;top:12px" width="22" height="24" viewBox="0 0 22 24"><path d="M.5,.5 H11.5 L17.5,6 V23.5 H.5 Z" fill="#fbfbfb" stroke="#9c9c9c"/>
<path d="M11.5,.5 V6 H17.5 Z" fill="#e4e4e4" stroke="#9c9c9c" stroke-width=".7"/>
<g stroke="#c6c6c6" stroke-width="1"><path d="M5,6.5H12 M3,9.5H15 M3,11.5H14 M3,14.5H9 M3,17.5H8 M3,19.5H8 M3,21.5H8"/></g>
<path d="M9.5,16.5 Q9.5,11.5 15,11.7 L15,10.3 L20.6,13.6 L15,16.8 L15,15 Q12.5,14.9 12.6,17 Z" fill="url(#gb)" stroke="#1c5c9a" stroke-width=".5"/>
<path d="M20.6,17.3 Q20.8,22.8 15,22.4 L15,23.9 L9.4,20.6 L15,17.4 L15,19.2 Q17.6,19.4 17.5,17.2 Z" fill="url(#gb)" stroke="#1c5c9a" stroke-width=".5"/></svg>
<svg style="left:198.7px;top:16.5px" width="22" height="14.5" viewBox="0 0 22 14.5"><path d="M0,0 L0,14.4 L13.9,14.4 L11,11.3 Q14.5,7.7 21.8,7.2 Q17.5,0 11.5,0 Q6.8,0 3.5,3.6 Z" fill="url(#gr)" stroke="#b41414" stroke-width=".5"/></svg>
<svg style="left:426px;top:12px" width="24" height="24" viewBox="0 0 24 24"><path d="M7,.5 H17 L23.5,7 V17 L17,23.5 H7 L.5,17 V7 Z" fill="url(#gst)" stroke="#a5b0c0"/>
<path d="M7.6,2 H16.4 L22,7.6 V16.4 L16.4,22 H7.6 L2,16.4 V7.6 Z" fill="none" stroke="#dde4ed" stroke-width="1"/>
<text x="12" y="15.2" font-family="Liberation Sans" font-weight="bold" font-size="8.4" text-anchor="middle" fill="#e8eef5" textLength="16" lengthAdjust="spacingAndGlyphs">STOP</text></svg>
<svg style="left:690px;top:13px" width="26" height="24" viewBox="0 0 26 24"><path d="M9,.3 H19.3 V8 H9 Z" fill="#fff" stroke="#7c7c7c" stroke-width=".7"/>
<rect x="10.4" y="1.6" width="7.6" height="6" fill="#4aa0e0"/><circle cx="14" cy="5" r="2.2" fill="#f2c040"/>
<path d="M.4,8.6 L7,4.8 H9 V7.6 H19.4 V5.8 L24,7.4 V16.4 L13.6,19 L.4,14.6 Z" fill="#7a7a7a" stroke="#5c5c5c" stroke-width=".5"/>
<path d="M2.4,9.4 L14.4,11.4 V18.6 L2.4,14.8 Z" fill="url(#gpr)"/>
<path d="M14.4,11.4 L24,8 V16.4 L14.4,18.8 Z" fill="#c9c9c9"/>
<path d="M19.4,7.8 L24,7.4 L14.4,11.4 L10,10.6 Z" fill="#a8a8a8"/>
<path d="M.4,8.6 L2.4,9.4 V14.8 L.4,14.4 Z" fill="#f6f6f6"/>
<path d="M.4,8.6 L7,4.8 L8.6,5 L2.4,9.4 Z" fill="#e8e8e8"/>
<rect x="11.6" y="10.4" width="2.4" height="1" fill="#38d038"/>
<path d="M14,17.2 H24.4 L19.2,23.2 Z" fill="#161616"/></svg>
<svg style="left:728px;top:11px" width="20" height="26" viewBox="0 0 20 26"><g font-family="Liberation Sans" font-weight="bold" font-size="32" text-anchor="middle" transform="scale(.84,1)" stroke-linejoin="round">
<text x="13" y="24.6" fill="#5a9ac6" stroke="#3f82b2" stroke-width="2.6">?</text>
<text x="11.2" y="23.8" fill="#4a8cba" stroke="#4a8cba" stroke-width="2.6">?</text>
<text x="11.2" y="23.8" fill="url(#gq)" stroke="#e6f0f6" stroke-width="1.1">?</text></g></svg>
<svg style="left:802px;top:11.5px" width="19" height="25" viewBox="0 0 19 25"><path d="M.6,.6 H13.4 V21.8 H.6 Z" fill="#7a7a7a" stroke="#5a5a5a" stroke-width=".6"/>
<path d="M2.4,2.2 H11.6 V20.6 H2.4 Z" fill="url(#gfr)"/>
<path d="M1,1.6 L5.4,3.4 V24 L1,20.6 Z" fill="url(#gdoor)" stroke="#5c6c7c" stroke-width=".6"/>
<path d="M5.4,14 L10.6,9.8 V12.2 Q15,12.4 15.6,10.2 L18,9.6 Q18.6,16.6 10.6,16.2 V18.4 Z" fill="url(#ggn)" stroke="#2a9a12" stroke-width=".5"/></svg>
<svg style="left:152px;top:101px" width="18" height="18" viewBox="0 0 18 18"><path d="M8,10.6 L2.6,15.6" stroke="#8a5a1c" stroke-width="3.2" stroke-linecap="round"/>
<path d="M8,10.6 L2.6,15.6" stroke="#dcae68" stroke-width="2.1" stroke-linecap="round"/>
<circle cx="11.5" cy="6.3" r="5.2" fill="url(#glens)" stroke="#4e565e" stroke-width="1.1"/>
<circle cx="11.5" cy="6.3" r="4.2" fill="none" stroke="#e4ecf0" stroke-width=".6" opacity=".7"/></svg>
<svg style="left:672px;top:85px" width="16" height="16" viewBox="0 0 16 16"><rect x=".5" y=".5" width="15" height="15" fill="#fff" stroke="#8e8e8e"/><path d="M5.5,0V16 M10.5,0V16 M0,5.5H16 M0,10.5H16" stroke="#8e8e8e" fill="none"/><rect x="2" y="2" width="2" height="2" fill="#e4ecf6"/><rect x="2" y="12" width="2" height="2" fill="#e4ecf6"/><rect x="7" y="2" width="2" height="2" fill="#e4ecf6"/><rect x="7" y="12" width="2" height="2" fill="#e4ecf6"/><rect x="12" y="2" width="2" height="2" fill="#e4ecf6"/><rect x="12" y="12" width="2" height="2" fill="#e4ecf6"/><rect x="0" y="5" width="16" height="6" fill="#1c5e9e"/><rect x="1" y="6" width="4" height="4" fill="#b4dcff"/><rect x="2" y="7" width="2" height="2" fill="#68b0f4"/><rect x="6" y="6" width="4" height="4" fill="#b4dcff"/><rect x="7" y="7" width="2" height="2" fill="#68b0f4"/><rect x="11" y="6" width="4" height="4" fill="#b4dcff"/><rect x="12" y="7" width="2" height="2" fill="#68b0f4"/></svg>
<svg style="left:672px;top:198px" width="16" height="16" viewBox="0 0 16 16"><rect x=".5" y=".5" width="15" height="15" fill="#fff" stroke="#8e8e8e"/><path d="M5.5,0V16 M10.5,0V16 M0,5.5H16 M0,10.5H16" stroke="#8e8e8e" fill="none"/><rect x="2" y="2" width="2" height="2" fill="#e4ecf6"/><rect x="2" y="12" width="2" height="2" fill="#e4ecf6"/><rect x="7" y="2" width="2" height="2" fill="#e4ecf6"/><rect x="7" y="12" width="2" height="2" fill="#e4ecf6"/><rect x="12" y="2" width="2" height="2" fill="#e4ecf6"/><rect x="12" y="12" width="2" height="2" fill="#e4ecf6"/><rect x="0" y="5" width="16" height="6" fill="#1c5e9e"/><rect x="1" y="6" width="4" height="4" fill="#b4dcff"/><rect x="2" y="7" width="2" height="2" fill="#68b0f4"/><rect x="6" y="6" width="4" height="4" fill="#b4dcff"/><rect x="7" y="7" width="2" height="2" fill="#68b0f4"/><rect x="11" y="6" width="4" height="4" fill="#b4dcff"/><rect x="12" y="7" width="2" height="2" fill="#68b0f4"/></svg>
<svg style="left:699.4px;top:88px" width="15" height="10" viewBox="0 0 15 10"><path d="M0.2,0.7 L0.2,9.9 L9.4,9.9 L7.3,7.7 Q9.8,5.3 14.9,5.1 Q12.3,0.2 8.8,0.2 Q5.8,0.4 3.6,4 Z" fill="url(#gr)" stroke="#b41414" stroke-width=".4"/></svg>
<svg style="left:699.4px;top:200.8px" width="15" height="10" viewBox="0 0 15 10"><path d="M0.2,0.7 L0.2,9.9 L9.4,9.9 L7.3,7.7 Q9.8,5.3 14.9,5.1 Q12.3,0.2 8.8,0.2 Q5.8,0.4 3.6,4 Z" fill="url(#gr)" stroke="#b41414" stroke-width=".4"/></svg>
<svg style="left:52px;top:276px" width="22" height="22" viewBox="0 0 22 22"><rect x="0" y="0" width="22" height="22" fill="#929292"/><rect x="1" y="1" width="6" height="6" fill="#fff"/><rect x="2" y="2" width="4" height="4" fill="#e4ebf5"/><rect x="1" y="8" width="6" height="6" fill="#fff"/><rect x="2" y="9" width="4" height="4" fill="#e4ebf5"/><rect x="1" y="15" width="6" height="6" fill="#fff"/><rect x="2" y="16" width="4" height="4" fill="#e4ebf5"/><rect x="8" y="1" width="6" height="6" fill="#fff"/><rect x="9" y="2" width="4" height="4" fill="#e4ebf5"/><rect x="8" y="8" width="6" height="6" fill="#fff"/><rect x="9" y="9" width="4" height="4" fill="#e4ebf5"/><rect x="8" y="15" width="6" height="6" fill="#fff"/><rect x="9" y="16" width="4" height="4" fill="#e4ebf5"/><rect x="15" y="1" width="6" height="6" fill="#fff"/><rect x="16" y="2" width="4" height="4" fill="#e4ebf5"/><rect x="15" y="8" width="6" height="6" fill="#fff"/><rect x="16" y="9" width="4" height="4" fill="#e4ebf5"/><rect x="15" y="15" width="6" height="6" fill="#fff"/><rect x="16" y="16" width="4" height="4" fill="#e4ebf5"/></svg>
<svg style="left:62px;top:290px" width="13.2" height="8.7" viewBox="0 0 22 14.5"><path d="M0,0 L0,14.4 L13.9,14.4 L11,11.3 Q14.5,7.7 21.8,7.2 Q17.5,0 11.5,0 Q6.8,0 3.5,3.6 Z" fill="url(#gr)" stroke="#b41414" stroke-width=".5"/></svg>
<svg style="left:68px;top:294px" width="5" height="4" viewBox="0 0 5 4"><ellipse cx="2.5" cy="2" rx="2.3" ry="1.4" fill="#f4f4f4"/></svg>
<svg style="left:23.8px;top:331.8px" width="9.6" height="14.4" viewBox="0 0 9.6 14.4"><path d="M4.8,0 L9.6,4.8 H6.8 V9.6 H9.6 L4.8,14.4 L0,9.6 H2.8 V4.8 H0 Z" fill="url(#gb)" stroke="#1f66a6" stroke-width=".4"/></svg>
<svg style="left:102.8px;top:339.8px" width="9.6" height="14" viewBox="0 0 9.6 14"><path d="M4.8,0.2 L9.2,5.4 H6.9 V13.9 H2.7 V5.4 H0.4 Z" fill="url(#gb)" stroke="#1f66a6" stroke-width=".3"/></svg>
<svg style="left:288px;top:339.8px" width="9.6" height="14" viewBox="0 0 9.6 14"><path d="M4.8,0.2 L9.2,5.4 H6.9 V13.9 H2.7 V5.4 H0.4 Z" fill="url(#gb)" stroke="#1f66a6" stroke-width=".3"/></svg>
</body></html>
